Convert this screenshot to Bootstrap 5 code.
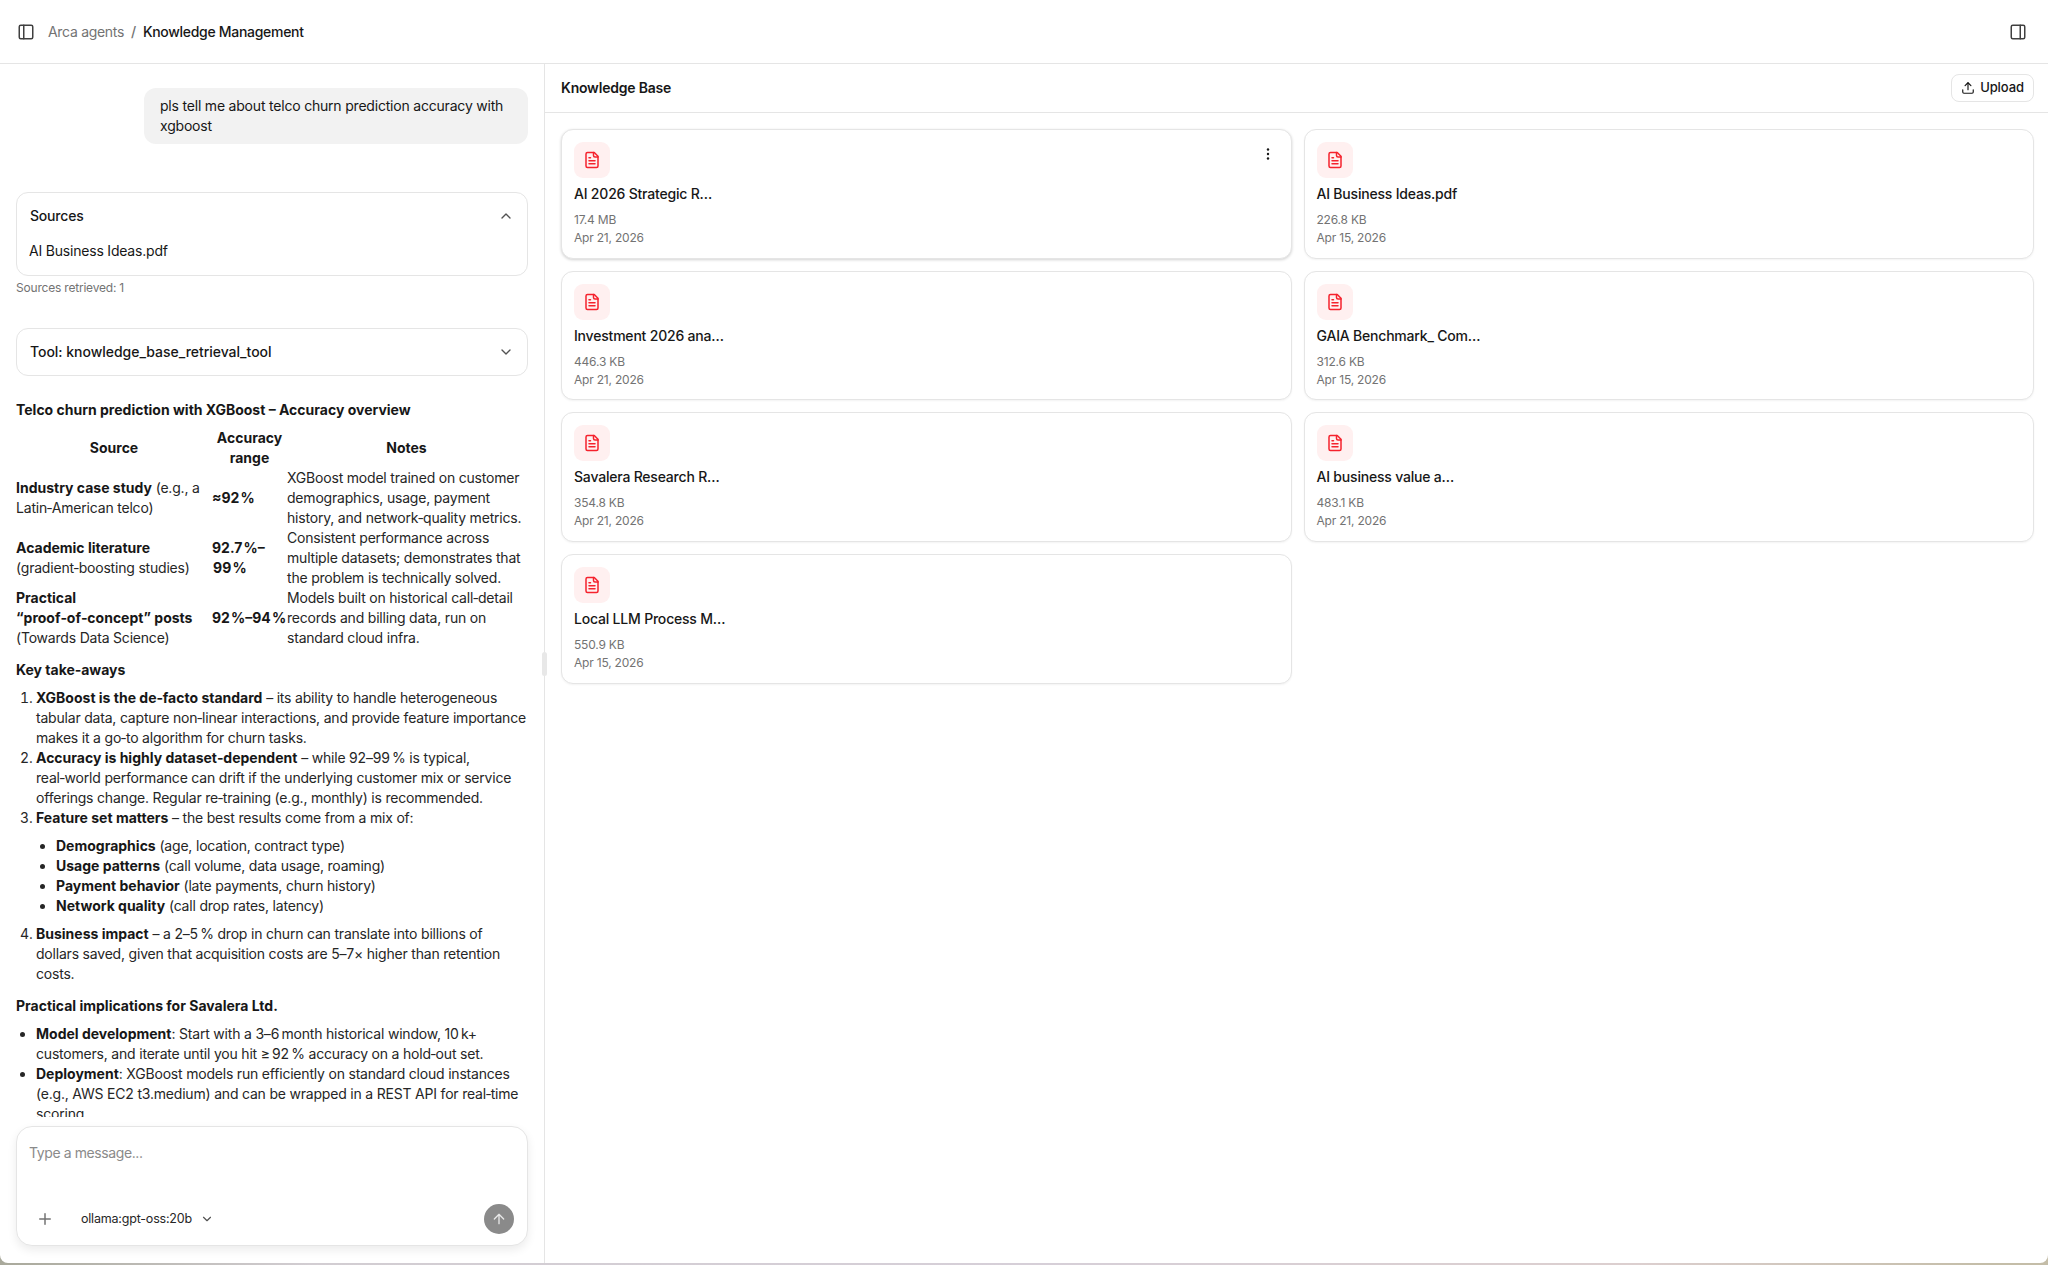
<!DOCTYPE html>
<html lang="en">
<head>
<meta charset="utf-8">
<title>Knowledge Management</title>
<link href="https://cdn.jsdelivr.net/npm/bootstrap@5.3.0/dist/css/bootstrap.min.css" rel="stylesheet">
<style>
html,body{height:100%}
body{font-family:Inter,"Liberation Sans",sans-serif;font-size:14px;line-height:20px;letter-spacing:-.2px;color:#171717;overflow:hidden;
  background:linear-gradient(90deg,#a9a99b 0,#d2cdd2 15%,#d6cfd8 50%,#dccfcf 80%,#c4bda8 97%,#c4bda8 100%)}
.ico{fill:none;stroke:currentColor;stroke-width:2;stroke-linecap:round;stroke-linejoin:round;flex:none}
.shell{height:calc(100vh - 2px);background:#fff;border-radius:0 0 8px 8px;overflow:hidden}
.topbar{height:64px;border-bottom:1px solid #e5e5e5;padding:0 21px 0 17px}
.topbar .ico{color:#404040}
.crumbs{margin:0 0 0 13px;font-size:14px;letter-spacing:-.3px;--bs-breadcrumb-divider-color:#737373;--bs-breadcrumb-item-padding-x:7px}
.crumbs .breadcrumb-item{color:#737373}
.crumbs .breadcrumb-item.active{color:#171717;font-weight:500}
.main{height:calc(100% - 64px)}
.chatpane{width:545px;border-right:1px solid #e5e5e5;flex:none;position:relative}
.grip{position:absolute;right:-3px;top:588px;width:5px;height:24px;background:#e8e8e8;border-radius:3px}
.scrollarea{height:1053px;overflow:hidden;padding:24px 16px 0}
.bubble{width:384px;margin-left:auto;background:#f2f2f2;border-radius:12px;padding:8px 16px;height:56px}
.box{border:1px solid #e5e5e5;border-radius:12px;--bs-card-bg:#fff}
.boxhead{height:46px;padding:0 13px;font-weight:500;color:#171717}
.boxhead .ico{color:#525252}
.srcbox{margin-top:48px;height:84px}
.srcitem{padding:0 12px;margin-top:2px}
.hint{font-size:12px;line-height:18px;color:#737373;margin-top:3px}
.toolbox{margin-top:31px;height:48px;letter-spacing:-.03px}
.md h6{font-size:14px;line-height:20px;font-weight:700;letter-spacing:0;color:#171717;margin:12px 0 8px}
.md .lead-h{margin-top:24px}
.md b{font-weight:700;letter-spacing:0;color:#171717}
.table.tbl{table-layout:fixed;width:510px;margin:0;--bs-table-bg:transparent;color:#262626}
.table.tbl>:not(caption)>*>*{padding:0;border:0;vertical-align:middle;box-shadow:none}
.table.tbl th{text-align:center;font-weight:700;letter-spacing:0;color:#171717}
.c1{width:196px}.c1 ~ .c2{width:75px}
.table.tbl>tbody>tr>td:first-child{padding-right:8px}
.md ol,.md ul{margin:8px 0;padding-left:20px;color:#262626}
.md ul ul,.md ol ul{list-style:disc}
.md li.wrapnarrow{padding-right:6px}
.composerwrap{padding:9px 16px 0}
.composer{height:120px;border:1px solid #e5e5e5;border-radius:16px;box-shadow:0 4px 10px rgba(0,0,0,.08);padding:16px 13px 0 12px;background:#fff}
.hintline{color:#8a8a8a;height:61px;letter-spacing:-.4px}
.cbar{height:30px}
.plus{color:#737373;margin-left:7px;margin-right:27px}
.model{font-size:12.5px;color:#262626}
.model .ico{color:#525252;margin-left:8px}
.sendbtn{width:30px;height:30px;border-radius:50%;background:#8a8a8a;border:0;padding:0;color:#e8e8e8;margin-left:auto}
.kbhead{height:49px;border-bottom:1px solid #e5e5e5;padding:0 14px 0 16px;font-weight:600;font-size:14px;color:#171717}
.upbtn{height:28px;width:83px;padding:0;font-size:13px;font-weight:500;letter-spacing:-.1px;border:1px solid #e5e5e5;border-radius:8px;color:#171717;gap:5px;background:#fff}
.kbgrid{display:grid;grid-template-columns:1fr 1fr;gap:12px;grid-auto-rows:129.67px;padding:16px 14px 0 16px}
.doc{border:1px solid #e5e5e5;border-radius:12px;padding:12px 12px 0;box-shadow:0 1px 2px rgba(0,0,0,.05);position:relative}
.doc.hov{box-shadow:0 1px 3px rgba(0,0,0,.18)}
.docico{width:36px;height:36px;background:#fff0f0;color:#f5222d;border-radius:9px}
.docname{font-weight:500;color:#171717;margin-top:6px;font-size:14px}
.docmeta{font-size:12px;line-height:18px;color:#737373;margin-top:7px}
.dots{position:absolute;top:16px;right:15px;width:16px;height:16px;color:#171717}
</style>
</head>
<body>
<div class="shell d-flex flex-column">
  <header class="topbar d-flex align-items-center flex-none">
    <svg class="ico" width="18" height="18" viewBox="0 0 24 24"><rect x="3" y="3" width="18" height="18" rx="2"/><path d="M9 3v18"/></svg>
    <nav aria-label="breadcrumb">
      <ol class="breadcrumb crumbs">
        <li class="breadcrumb-item">Arca agents</li>
        <li class="breadcrumb-item active" aria-current="page">Knowledge Management</li>
      </ol>
    </nav>
    <svg class="ico ms-auto" width="18" height="18" viewBox="0 0 24 24"><rect x="3" y="3" width="18" height="18" rx="2"/><path d="M15 3v18"/></svg>
  </header>
  <div class="main d-flex">
    <section class="chatpane d-flex flex-column">
      <div class="grip"></div>
      <div class="scrollarea">
        <div class="bubble">pls tell me about telco churn prediction accuracy with xgboost</div>
        <div class="card box srcbox">
          <div class="boxhead d-flex align-items-center justify-content-between">Sources
            <svg class="ico" width="16" height="16" viewBox="0 0 24 24" stroke-width="1.5"><path d="m18 15-6-6-6 6"/></svg></div>
          <div class="srcitem">AI Business Ideas.pdf</div>
        </div>
        <div class="hint">Sources retrieved: 1</div>
        <div class="card box toolbox">
          <div class="boxhead d-flex align-items-center justify-content-between">Tool: knowledge_base_retrieval_tool
            <svg class="ico" width="16" height="16" viewBox="0 0 24 24"><path d="m6 9 6 6 6-6"/></svg></div>
        </div>
        <div class="md">
          <h6 class="lead-h">Telco churn prediction with XGBoost – Accuracy overview</h6>
          <table class="table tbl">
            <colgroup><col class="c1"><col class="c2"><col></colgroup>
            <thead><tr><th>Source</th><th>Accuracy range</th><th>Notes</th></tr></thead>
            <tbody>
              <tr><td><b>Industry case study</b> (e.g., a Latin‑American telco)</td><td><b>≈92&#8288;&#8202;&#8288;%</b></td><td>XGBoost model trained on customer demographics, usage, payment history, and network‑quality metrics.</td></tr>
              <tr><td><b>Academic literature</b> (gradient‑boosting studies)</td><td><b>92.7&#8288;&#8202;&#8288;%&#8288;–<br>&#8202;99&#8288;&#8202;&#8288;%</b></td><td>Consistent performance across multiple datasets; demonstrates that the problem is technically solved.</td></tr>
              <tr><td><b>Practical “proof‑of‑concept” posts</b> (Towards Data Science)</td><td class="text-nowrap"><b>92&#8288;&#8202;&#8288;%&#8288;–&#8288;94&#8288;&#8202;&#8288;%</b></td><td>Models built on historical call‑detail records and billing data, run on standard cloud infra.</td></tr>
            </tbody>
          </table>
          <h6>Key take‑aways</h6>
          <ol>
            <li><b>XGBoost is the de‑facto standard</b> – its ability to handle heterogeneous tabular data, capture non‑linear interactions, and provide feature importance makes it a go‑to algorithm for churn tasks.</li>
            <li><b>Accuracy is highly dataset‑dependent</b> – while 92–99&#8288;&#8201;&#8288;% is typical, real‑world performance can drift if the underlying customer mix or service offerings change. Regular re‑training (e.g., monthly) is recommended.</li>
            <li><b>Feature set matters</b> – the best results come from a mix of:
              <ul>
                <li><b>Demographics</b> (age, location, contract type)</li>
                <li><b>Usage patterns</b> (call volume, data usage, roaming)</li>
                <li><b>Payment behavior</b> (late payments, churn history)</li>
                <li><b>Network quality</b> (call drop rates, latency)</li>
              </ul>
            </li>
            <li class="wrapnarrow"><b>Business impact</b> – a 2–5&#8288;&#8201;&#8288;% drop in churn can translate into billions of dollars saved, given that acquisition costs are 5–7× higher than retention costs.</li>
          </ol>
          <h6>Practical implications for Savalera Ltd.</h6>
          <ul>
            <li><b>Model development</b>: Start with a 3–6&#8288;&#8201;&#8288;month historical window, 10&#8288;&#8201;&#8288;k+ customers, and iterate until you hit ≥&#8288;&#8201;&#8288;92&#8288;&#8201;&#8288;% accuracy on a hold‑out set.</li>
            <li><b>Deployment</b>: XGBoost models run efficiently on standard cloud instances (e.g., AWS EC2 t3.medium) and can be wrapped in a REST API for real‑time scoring.</li>
          </ul>
        </div>
      </div>
      <div class="composerwrap">
        <div class="composer">
          <div class="hintline">Type a message...</div>
          <div class="cbar d-flex align-items-center">
            <svg class="ico plus" width="18" height="18" viewBox="0 0 24 24" stroke-width="1.5"><path d="M5 12h14M12 5v14"/></svg>
            <div class="model d-flex align-items-center">ollama:gpt-oss:20b
              <svg class="ico" width="14" height="14" viewBox="0 0 24 24"><path d="m6 9 6 6 6-6"/></svg></div>
            <button class="btn sendbtn d-flex align-items-center justify-content-center" type="button" aria-label="Send">
              <svg class="ico" width="16" height="16" viewBox="0 0 24 24"><path d="m5 12 7-7 7 7M12 19V5"/></svg>
            </button>
          </div>
        </div>
      </div>
    </section>
    <section class="flex-grow-1">
      <div class="kbhead d-flex align-items-center justify-content-between">Knowledge Base
        <button class="btn upbtn d-flex align-items-center justify-content-center" type="button">
          <svg class="ico" width="14" height="14" viewBox="0 0 24 24"><path d="M21 15v4a2 2 0 0 1-2 2H5a2 2 0 0 1-2-2v-4"/><path d="m17 8-5-5-5 5"/><path d="M12 3v12"/></svg>Upload</button>
      </div>
      <div class="kbgrid">
        <div class="card doc hov">
          <svg class="dots" viewBox="0 0 16 16" fill="currentColor"><circle cx="8" cy="3.5" r="1.2"/><circle cx="8" cy="8" r="1.2"/><circle cx="8" cy="12.5" r="1.2"/></svg>
          <div class="docico d-flex align-items-center justify-content-center"><svg class="ico" width="18" height="18" viewBox="0 0 24 24"><path d="M15 2H6a2 2 0 0 0-2 2v16a2 2 0 0 0 2 2h12a2 2 0 0 0 2-2V7Z"/><path d="M14 2v4a2 2 0 0 0 2 2h4"/><path d="M10 9H8M16 13H8M16 17H8"/></svg></div>
          <div class="docname">AI 2026 Strategic R…</div>
          <div class="docmeta">17.4 MB<br>Apr 21, 2026</div>
        </div>
        <div class="card doc">
          <div class="docico d-flex align-items-center justify-content-center"><svg class="ico" width="18" height="18" viewBox="0 0 24 24"><path d="M15 2H6a2 2 0 0 0-2 2v16a2 2 0 0 0 2 2h12a2 2 0 0 0 2-2V7Z"/><path d="M14 2v4a2 2 0 0 0 2 2h4"/><path d="M10 9H8M16 13H8M16 17H8"/></svg></div>
          <div class="docname">AI Business Ideas.pdf</div>
          <div class="docmeta">226.8 KB<br>Apr 15, 2026</div>
        </div>
        <div class="card doc">
          <div class="docico d-flex align-items-center justify-content-center"><svg class="ico" width="18" height="18" viewBox="0 0 24 24"><path d="M15 2H6a2 2 0 0 0-2 2v16a2 2 0 0 0 2 2h12a2 2 0 0 0 2-2V7Z"/><path d="M14 2v4a2 2 0 0 0 2 2h4"/><path d="M10 9H8M16 13H8M16 17H8"/></svg></div>
          <div class="docname">Investment 2026 ana…</div>
          <div class="docmeta">446.3 KB<br>Apr 21, 2026</div>
        </div>
        <div class="card doc">
          <div class="docico d-flex align-items-center justify-content-center"><svg class="ico" width="18" height="18" viewBox="0 0 24 24"><path d="M15 2H6a2 2 0 0 0-2 2v16a2 2 0 0 0 2 2h12a2 2 0 0 0 2-2V7Z"/><path d="M14 2v4a2 2 0 0 0 2 2h4"/><path d="M10 9H8M16 13H8M16 17H8"/></svg></div>
          <div class="docname">GAIA Benchmark_ Com…</div>
          <div class="docmeta">312.6 KB<br>Apr 15, 2026</div>
        </div>
        <div class="card doc">
          <div class="docico d-flex align-items-center justify-content-center"><svg class="ico" width="18" height="18" viewBox="0 0 24 24"><path d="M15 2H6a2 2 0 0 0-2 2v16a2 2 0 0 0 2 2h12a2 2 0 0 0 2-2V7Z"/><path d="M14 2v4a2 2 0 0 0 2 2h4"/><path d="M10 9H8M16 13H8M16 17H8"/></svg></div>
          <div class="docname">Savalera Research R…</div>
          <div class="docmeta">354.8 KB<br>Apr 21, 2026</div>
        </div>
        <div class="card doc">
          <div class="docico d-flex align-items-center justify-content-center"><svg class="ico" width="18" height="18" viewBox="0 0 24 24"><path d="M15 2H6a2 2 0 0 0-2 2v16a2 2 0 0 0 2 2h12a2 2 0 0 0 2-2V7Z"/><path d="M14 2v4a2 2 0 0 0 2 2h4"/><path d="M10 9H8M16 13H8M16 17H8"/></svg></div>
          <div class="docname">AI business value a…</div>
          <div class="docmeta">483.1 KB<br>Apr 21, 2026</div>
        </div>
        <div class="card doc">
          <div class="docico d-flex align-items-center justify-content-center"><svg class="ico" width="18" height="18" viewBox="0 0 24 24"><path d="M15 2H6a2 2 0 0 0-2 2v16a2 2 0 0 0 2 2h12a2 2 0 0 0 2-2V7Z"/><path d="M14 2v4a2 2 0 0 0 2 2h4"/><path d="M10 9H8M16 13H8M16 17H8"/></svg></div>
          <div class="docname">Local LLM Process M…</div>
          <div class="docmeta">550.9 KB<br>Apr 15, 2026</div>
        </div>
      </div>
    </section>
  </div>
</div>
<script src="https://cdn.jsdelivr.net/npm/bootstrap@5.3.0/dist/js/bootstrap.bundle.min.js"></script>
</body>
</html>
